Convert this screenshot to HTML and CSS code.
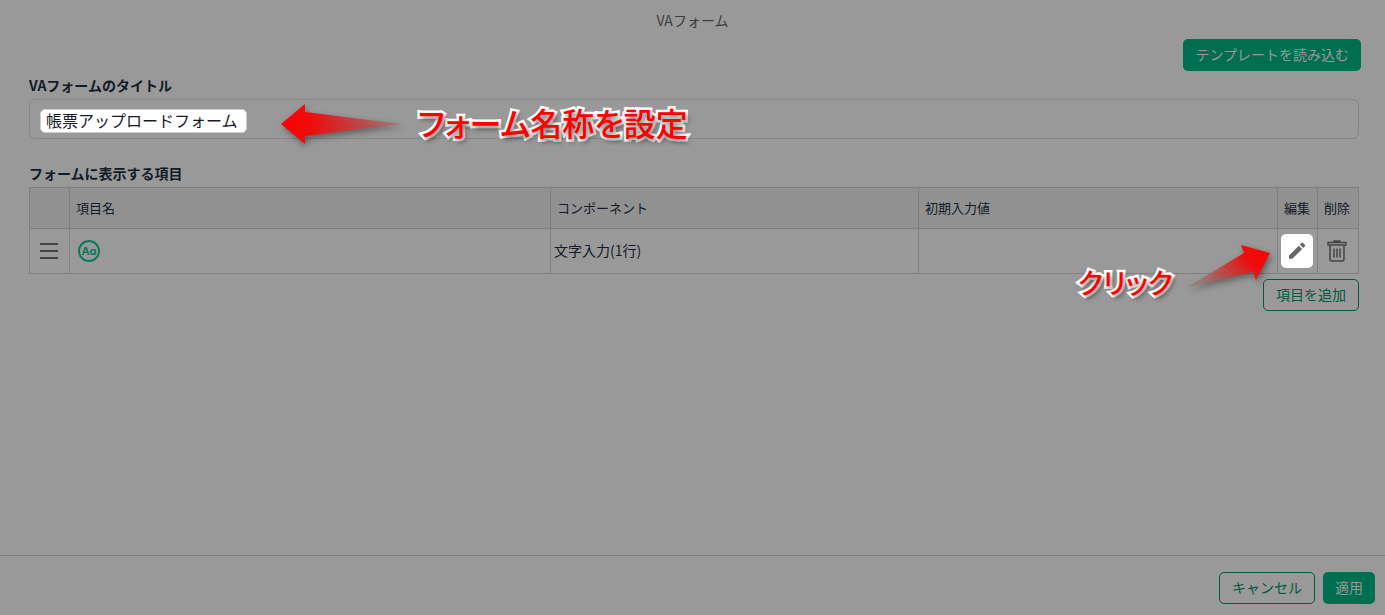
FILE: index.html
```html
<!doctype html>
<html lang="ja">
    <head>
        <meta charset="UTF-8" />
        <meta name="viewport" content="width=device-width, initial-scale=1.0" />
        <title>VAフォーム</title>
        <link rel="stylesheet" href="styles.css">
    </head>
    <body>
        <header class="dialog-header">
            <h1>VAフォーム</h1>
            <button class="btn primary" type="button">テンプレートを読み込む</button>
        </header>

        <main>
            <label class="label" for="form-title">VAフォームのタイトル</label>
            <div class="field">
                <input id="form-title" type="text" value="帳票アップロードフォーム" />
                <div class="guide guide-title">
                    <svg width="124" height="44" viewBox="0 0 124 44">
                        <defs>
                            <linearGradient id="fade-left" x1="0" x2="1" y1="0" y2="0">
                                <stop offset="0" stop-color="#ff0000" />
                                <stop offset="0.25" stop-color="#ee0c0c" />
                                <stop offset="1" stop-color="#a07070" stop-opacity="0.8" />
                            </linearGradient>
                        </defs>
                        <path fill="url(#fade-left)" d="M1 22 25 2V10L121 22 25 34V42Z" />
                    </svg>
                    <span>フォーム名称を設定</span>
                </div>
            </div>

            <h2 class="label">フォームに表示する項目</h2>
            <table>
                <colgroup>
                    <col class="col-icon" />
                    <col />
                    <col class="col-component" />
                    <col class="col-value" />
                    <col class="col-icon" />
                    <col class="col-delete" />
                </colgroup>
                <thead>
                    <tr>
                        <th></th>
                        <th>項目名</th>
                        <th>コンポーネント</th>
                        <th>初期入力値</th>
                        <th>編集</th>
                        <th>削除</th>
                    </tr>
                </thead>
                <tbody>
                    <tr>
                        <td class="icon-cell">
                            <button class="icon-btn" type="button" aria-label="並べ替え">
                                <svg width="20" height="20" viewBox="0 0 20 20" fill="none" stroke="#444" stroke-width="2">
                                    <path d="M1 3H19M1 10H19M1 17H19" />
                                </svg>
                            </button>
                        </td>
                        <td class="name-cell"><span class="type-badge">Aa</span></td>
                        <td>文字入力(1行)</td>
                        <td></td>
                        <td class="icon-cell edit-cell">
                            <button class="icon-btn active" type="button" aria-label="編集">
                                <svg width="20" height="20" viewBox="0 0 20 20" fill="#666">
                                    <path d="M2 14.500 11.800 4.700 15.100 8 5.300 17.800H2ZM12.900 3.600 14.500 2Q15.300 1.300 16.100 2L17.800 3.700Q18.500 4.500 17.800 5.300L16.200 6.900Z" />
                                </svg>
                            </button>
                            <div class="guide guide-edit">
                                <span>クリック</span>
                                <svg width="84" height="48" viewBox="0 0 84 48">
                                    <defs>
                                        <linearGradient id="fade-right" x1="1" x2="0" y1="0" y2="0.5">
                                            <stop offset="0" stop-color="#ff0000" />
                                            <stop offset="0.35" stop-color="#ee0c0c" />
                                            <stop offset="1" stop-color="#a07070" stop-opacity="0.8" />
                                        </linearGradient>
                                    </defs>
                                    <path fill="url(#fade-right)" d="M1 45 57 11 54 3 83 11 69 38 66 30Z" />
                                </svg>
                            </div>
                        </td>
                        <td class="icon-cell">
                            <button class="icon-btn" type="button" aria-label="削除">
                                <svg width="20" height="22" viewBox="0 0 20 22" fill="none" stroke="#444" stroke-width="1.500" stroke-linejoin="round">
                                    <path d="M7 2V1H13V2M1 2.500H19V5H1ZM3 5V19Q3 21 5 21H15Q17 21 17 19V5M7 8.500V17.500M10 8.500V17.500M13 8.500V17.500" />
                                </svg>
                            </button>
                        </td>
                    </tr>
                </tbody>
            </table>
            <div class="add-row">
                <button class="btn outline" type="button">項目を追加</button>
            </div>
        </main>

        <footer>
            <button class="btn outline" type="button">キャンセル</button>
            <button class="btn primary" type="button">適用</button>
        </footer>
    </body>
</html>
```

FILE: styles.css
```css
* {
    box-sizing: border-box;
}

body {
    margin: 0;
    min-height: 100vh;
    display: flex;
    flex-direction: column;
    background-color: #999;
    color: #141a26;
    font-family: "Noto Sans CJK JP", sans-serif;
    font-size: 14px;
    line-height: 20px;
}

button,
input {
    font: inherit;
    color: inherit;
}

.dialog-header {
    display: flex;
    flex-direction: column;
    padding: 10px 24px 0;
}

h1 {
    margin: 0 0 9px;
    font-size: 14px;
    font-weight: 400;
    text-align: center;
    color: #3d3d3d;
}

.dialog-header .btn {
    align-self: flex-end;
}

.btn {
    height: 32px;
    padding: 0 12px 2px;
    border: none;
    border-radius: 5px;
    background-color: transparent;
    white-space: nowrap;
}

.btn.primary {
    background-color: #006e50;
    color: #999;
}

.btn.outline {
    border: 1px solid #005a40;
    color: #005a40;
}

main {
    flex: 1;
    padding: 4px 26px 20px 29px;
}

.label {
    display: block;
    margin: 0 0 4px;
    font-size: 14px;
    font-weight: 700;
}

/* title field */
.field {
    position: relative;
    display: flex;
    align-items: center;
    height: 40px;
    margin-bottom: 24px;
    padding: 3px 10px 0;
    border: 1px solid #85878d;
    border-radius: 6px;
}

.field input {
    width: 207px;
    height: 24px;
    padding: 0 5px 2px;
    border: 1px solid #ccc;
    border-radius: 5px;
    background-color: #fff;
    font-size: 16px;
}

/* items table */
table {
    width: 100%;
    table-layout: fixed;
    border-collapse: collapse;
}

.col-icon {
    width: 40px;
}

.col-component {
    width: 368px;
}

.col-value {
    width: 359px;
}

.col-delete {
    width: 41px;
}

th,
td {
    border: 1px solid #808080;
    text-align: left;
}

th {
    height: 41px;
    padding: 0 0 0 6px;
    background-color: #919191;
    font-size: 13px;
    font-weight: 400;
    white-space: nowrap;
}

td {
    height: 45px;
    padding: 0 3px 2px;
}

td.icon-cell {
    padding: 0;
}

td.name-cell {
    padding: 0 8px;
}

.icon-btn {
    display: flex;
    align-items: center;
    justify-content: center;
    width: 32px;
    height: 34px;
    margin: 0 3px;
    padding: 0;
    border: none;
    border-radius: 5px;
    background-color: transparent;
}

.icon-btn.active {
    background-color: #fff;
}

.type-badge {
    display: flex;
    align-items: center;
    justify-content: center;
    width: 22px;
    height: 22px;
    border: 2px solid #0a7a5a;
    border-radius: 50%;
    color: #0a7a5a;
    font-family: Inter, sans-serif;
    font-size: 11px;
    font-weight: 700;
    font-feature-settings: "cv11";
}

.add-row {
    display: flex;
    justify-content: flex-end;
    margin-top: 5px;
}

footer {
    display: flex;
    justify-content: flex-end;
    gap: 8px;
    padding: 16px 10px 11px;
    border-top: 1px solid #808080;
}

/* guide arrows laid over the form */
.guide {
    position: absolute;
    display: flex;
    align-items: flex-start;
    color: #ff0000;
    font-size: 32px;
    font-weight: 500;
    line-height: 40px;
    font-feature-settings: "palt";
    white-space: nowrap;
    pointer-events: none;
}

.guide span {
    -webkit-text-stroke: 5px #fff;
    paint-order: stroke fill;
    text-shadow: 2px 3px 5px rgba(0, 0, 0, 0.6);
}

.guide svg {
    overflow: visible;
    filter: drop-shadow(2px 3px 3px rgba(0, 0, 0, 0.4));
}

.guide-title {
    left: 250px;
    top: 2px;
    gap: 14px;
}

.edit-cell {
    position: relative;
}

.guide-edit {
    right: 46px;
    top: 13px;
    gap: 14px;
    font-size: 28px;
}

.guide-edit span {
    margin-top: 20px;
}
```
